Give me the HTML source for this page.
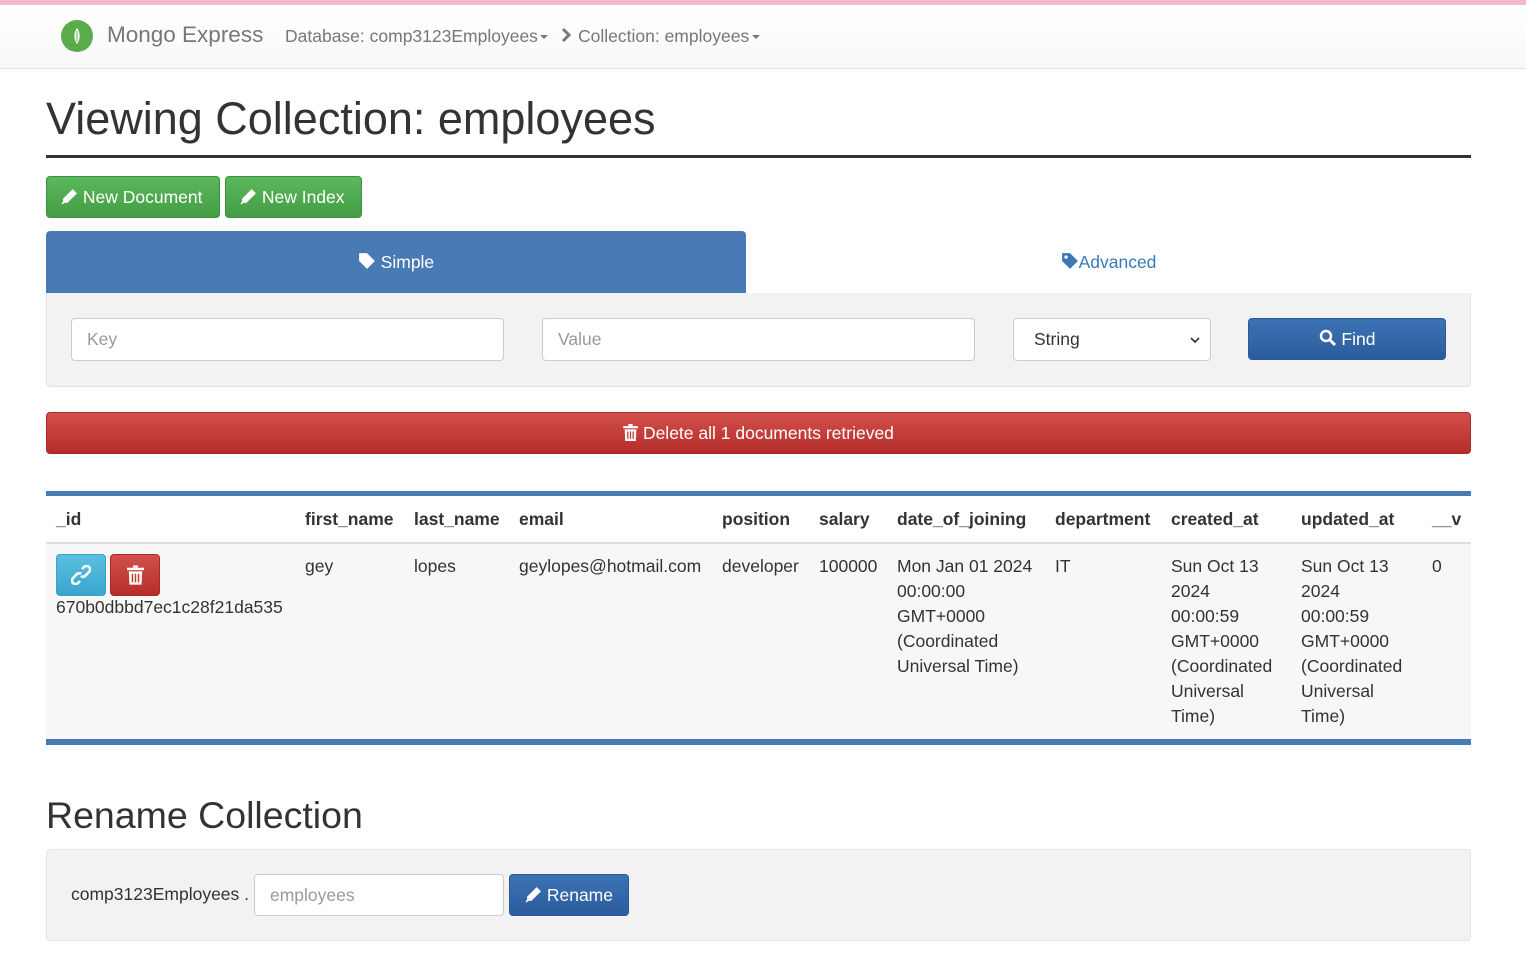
<!DOCTYPE html>
<html><head><meta charset="utf-8"><style>
*{box-sizing:border-box;margin:0;padding:0}
body{width:1526px;height:954px;overflow:hidden;background:#fff;font-family:"Liberation Sans",sans-serif;color:#333;position:relative}
.a{position:absolute}
svg{vertical-align:-2px}
.topbar{left:0;top:0;width:1526px;height:5px;background:#f2b8cf}
.nav{left:0;top:5px;width:1526px;height:64px;background:linear-gradient(#fff,#f8f8f8);border-bottom:1px solid #e2e2e2}
.btn-g{background:linear-gradient(#5cb85c,#449d44);border:1px solid #3e8f3e;border-radius:4px;color:#fff;font-size:17.5px;height:42px;line-height:40px;padding-left:14px}
.inp{background:#fff;border:1px solid #ccc;border-radius:4px;height:43px;line-height:41px;padding-left:15px;font-size:17.5px;color:#999}
.th{font-weight:bold;font-size:17.5px;color:#333;top:509px}
.td{font-size:17.5px;line-height:25px;top:554px;color:#333}
</style></head><body>
<svg width="0" height="0" style="position:absolute"><defs>
<symbol id="pen" viewBox="0 0 16 16"><path d="M11 1 L15 5 L6 14 L2 14 L2 10 Z" fill="#fff"/><path d="M1 15 L3 13" stroke="#fff" stroke-width="1.5"/></symbol>
<symbol id="tag" viewBox="0 0 16 16"><path d="M1 1 H8 L15 8 L8 15 L1 8 Z" fill="currentColor"/><circle cx="4.5" cy="4.5" r="1.5" fill="#fff" class="h"/></symbol>
<symbol id="trash" viewBox="0 0 14 16"><rect x="0" y="2" width="14" height="2" fill="#fff"/><rect x="5" y="0" width="4" height="2" fill="#fff"/><path d="M1.5 5 H12.5 L12 16 H2 Z" fill="#fff"/><path d="M4.5 7 V14 M7 7 V14 M9.5 7 V14" stroke="currentColor" stroke-width="1.2"/></symbol>
</defs></svg>
<div class="a topbar"></div>
<div class="a nav">
<svg class="a" style="left:61px;top:15px" width="32" height="32" viewBox="0 0 32 32"><circle cx="16" cy="16" r="16" fill="#5aab4a"/><path d="M16 8 C19.5 12 19.5 20 16 24 C12.5 20 12.5 12 16 8Z" fill="#fff"/><path d="M16 11 L16 22" stroke="#5aab4a" stroke-width="1"/></svg>
<div class="a" style="left:107px;top:17px;font-size:22.5px;color:#777">Mongo Express</div>
<div class="a" style="left:285px;top:21px;font-size:17.5px;color:#777">Database: comp3123Employees<span style="display:inline-block;width:0;height:0;border-left:4px solid transparent;border-right:4px solid transparent;border-top:4px solid #777;margin-left:2px;vertical-align:3px"></span></div>
<svg class="a" style="left:561px;top:22px" width="10" height="16" viewBox="0 0 10 16"><path d="M2 2 L8 8 L2 14" stroke="#777" stroke-width="3" fill="none"/></svg>
<div class="a" style="left:578px;top:21px;font-size:17.5px;color:#777">Collection: employees<span style="display:inline-block;width:0;height:0;border-left:4px solid transparent;border-right:4px solid transparent;border-top:4px solid #777;margin-left:3px;vertical-align:3px"></span></div>
</div>
<div class="a" style="left:46px;top:93px;font-size:45px;color:#333">Viewing Collection: employees</div>
<div class="a" style="left:46px;top:155px;width:1425px;height:3px;background:#333"></div>
<div class="a btn-g" style="left:46px;top:176px;width:174px"><svg width="17" height="17"><use href="#pen"/></svg> New Document</div>
<div class="a btn-g" style="left:225px;top:176px;width:137px"><svg width="17" height="17"><use href="#pen"/></svg> New Index</div>
<div class="a" style="left:46px;top:231px;width:700px;height:62px;background:#4a7ab5;border-radius:4px 4px 0 0;color:#fff;font-size:17.5px;text-align:center;line-height:62px"><svg width="18" height="18" style="color:#fff"><use href="#tag"/></svg> Simple</div>
<div class="a" style="left:746px;top:231px;width:725px;height:62px;color:#3a78b6;font-size:17.5px;text-align:center;line-height:62px"><svg width="18" height="18" style="color:#3a78b6"><use href="#tag"/></svg>Advanced</div>
<div class="a" style="left:46px;top:293px;width:1425px;height:94px;background:#f2f2f2;border:1px solid #e3e3e3;border-top:none;border-radius:0 0 4px 4px"></div>
<div class="a inp" style="left:71px;top:318px;width:433px">Key</div>
<div class="a inp" style="left:542px;top:318px;width:433px">Value</div>
<div class="a inp" style="left:1013px;top:318px;width:198px;color:#333;padding-left:20px">String<svg class="a" style="right:10px;top:17px" width="10" height="8" viewBox="0 0 10 8"><path d="M1 2 L5 6 L9 2" stroke="#333" stroke-width="1.6" fill="none"/></svg></div>
<div class="a" style="left:1248px;top:318px;width:198px;height:42px;background:linear-gradient(#3b73b5,#2b5c9c);border:1px solid #2a5a96;border-radius:4px;color:#fff;font-size:17.5px;text-align:center;line-height:40px"><svg width="18" height="18" viewBox="0 0 18 18"><circle cx="7" cy="7" r="5" stroke="#fff" stroke-width="2.5" fill="none"/><path d="M11 11 L16 16" stroke="#fff" stroke-width="3"/></svg> Find</div>
<div class="a" style="left:46px;top:412px;width:1425px;height:42px;background:linear-gradient(#d2504c,#b52d2a);border:1px solid #a82a27;border-radius:4px;color:#fff;font-size:17.5px;text-align:center;line-height:40px"><svg width="15" height="17" viewBox="0 0 14 16" style="color:#c0392b"><use href="#trash"/></svg> Delete all 1 documents retrieved</div>
<div class="a" style="left:46px;top:491px;width:1425px;height:5px;background:#4a7ab5"></div>
<div class="a" style="left:46px;top:542px;width:1425px;height:197px;background:#f7f7f7;border-top:2px solid #ddd"></div>
<div class="a" style="left:46px;top:739px;width:1425px;height:6px;background:#4a7ab5"></div>
<div class="a th" style="left:56px">_id</div>
<div class="a th" style="left:305px">first_name</div>
<div class="a th" style="left:414px">last_name</div>
<div class="a th" style="left:519px">email</div>
<div class="a th" style="left:722px">position</div>
<div class="a th" style="left:819px">salary</div>
<div class="a th" style="left:897px">date_of_joining</div>
<div class="a th" style="left:1055px">department</div>
<div class="a th" style="left:1171px">created_at</div>
<div class="a th" style="left:1301px">updated_at</div>
<div class="a th" style="left:1432px">__v</div>
<div class="a" style="left:56px;top:554px;width:50px;height:42px;background:linear-gradient(#5bc0de,#3aa5cf);border:1px solid #39a3c9;border-radius:4px;text-align:center;padding-top:10px"><svg width="20" height="20" viewBox="0 0 20 20"><path d="M11 4 L13 2 A3 3 0 0 1 18 7 L14 11 A3 3 0 0 1 10 11" stroke="#fff" stroke-width="2.6" fill="none"/><path d="M9 16 L7 18 A3 3 0 0 1 2 13 L6 9 A3 3 0 0 1 10 9" stroke="#fff" stroke-width="2.6" fill="none"/></svg></div>
<div class="a" style="left:110px;top:554px;width:50px;height:42px;background:linear-gradient(#d2504c,#b52d2a);border:1px solid #a82a27;border-radius:4px;text-align:center;padding-top:10px"><svg width="17" height="20" viewBox="0 0 14 16" style="color:#c0392b"><use href="#trash"/></svg></div>
<div class="a td" style="left:56px;top:595px">670b0dbbd7ec1c28f21da535</div>
<div class="a td" style="left:305px">gey</div>
<div class="a td" style="left:414px">lopes</div>
<div class="a td" style="left:519px">geylopes@hotmail.com</div>
<div class="a td" style="left:722px">developer</div>
<div class="a td" style="left:819px">100000</div>
<div class="a td" style="left:897px">Mon Jan 01 2024<br>00:00:00<br>GMT+0000<br>(Coordinated<br>Universal Time)</div>
<div class="a td" style="left:1055px">IT</div>
<div class="a td" style="left:1171px">Sun Oct 13<br>2024<br>00:00:59<br>GMT+0000<br>(Coordinated<br>Universal<br>Time)</div>
<div class="a td" style="left:1301px">Sun Oct 13<br>2024<br>00:00:59<br>GMT+0000<br>(Coordinated<br>Universal<br>Time)</div>
<div class="a td" style="left:1432px">0</div>
<div class="a" style="left:46px;top:794px;font-size:37.5px;color:#333">Rename Collection</div>
<div class="a" style="left:46px;top:849px;width:1425px;height:92px;background:#f2f2f2;border:1px solid #e3e3e3;border-radius:4px"></div>
<div class="a" style="left:71px;top:884px;font-size:17.5px;color:#333">comp3123Employees .</div>
<div class="a inp" style="left:254px;top:874px;width:250px;height:42px">employees</div>
<div class="a" style="left:509px;top:874px;width:120px;height:42px;background:linear-gradient(#3b73b5,#2b5c9c);border:1px solid #2a5a96;border-radius:4px;color:#fff;font-size:17.5px;text-align:center;line-height:40px"><svg width="17" height="17"><use href="#pen"/></svg> Rename</div>
</body></html>
